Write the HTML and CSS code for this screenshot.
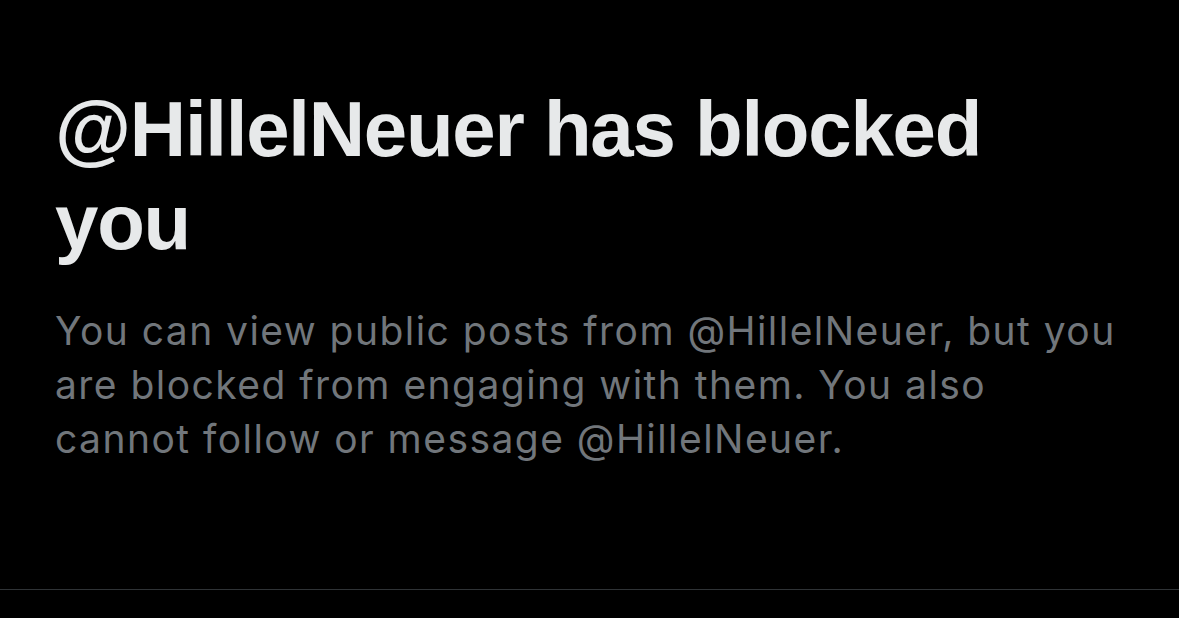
FILE: index.html
```html
<!DOCTYPE html>
<html lang="en">
<head>
<meta charset="utf-8">
<link rel="stylesheet" href="styles.css">
<title>Blocked</title>
</head>
<body>
<main class="page">
  <section class="blocked">
    <h2 class="title">@HillelNeuer has blocked you</h2>
    <p class="desc">You can view public posts from @HillelNeuer, but you are blocked from engaging with them. You also cannot follow or message @HillelNeuer.</p>
  </section>
  <div class="divider"></div>
</main>
</body>
</html>
```
FILE: styles.css
```css
html, body {
  margin: 0;
  padding: 0;
  background: #000;
}
.page {
  width: 1179px;
  height: 618px;
  display: flex;
  flex-direction: column;
}
.blocked {
  padding: 83px 55px 0 55px;
  height: 506px;
  box-sizing: border-box;
}
.title {
  margin: 0;
  font-family: "Liberation Sans", Arial, sans-serif;
  font-weight: 700;
  font-size: 78px;
  line-height: 93px;
  letter-spacing: -1.25px;
  color: #e7e9ea;
  width: 1000px;
}
.desc {
  margin: 35px 0 0 0;
  font-family: Inter, "Liberation Sans", sans-serif;
  font-size: 39px;
  line-height: 54px;
  letter-spacing: 1.45px;
  color: #71767b;
  width: 1062px;
}
.divider {
  height: 1px;
  background: #2f3336;
  margin-top: 83px;
}
```
